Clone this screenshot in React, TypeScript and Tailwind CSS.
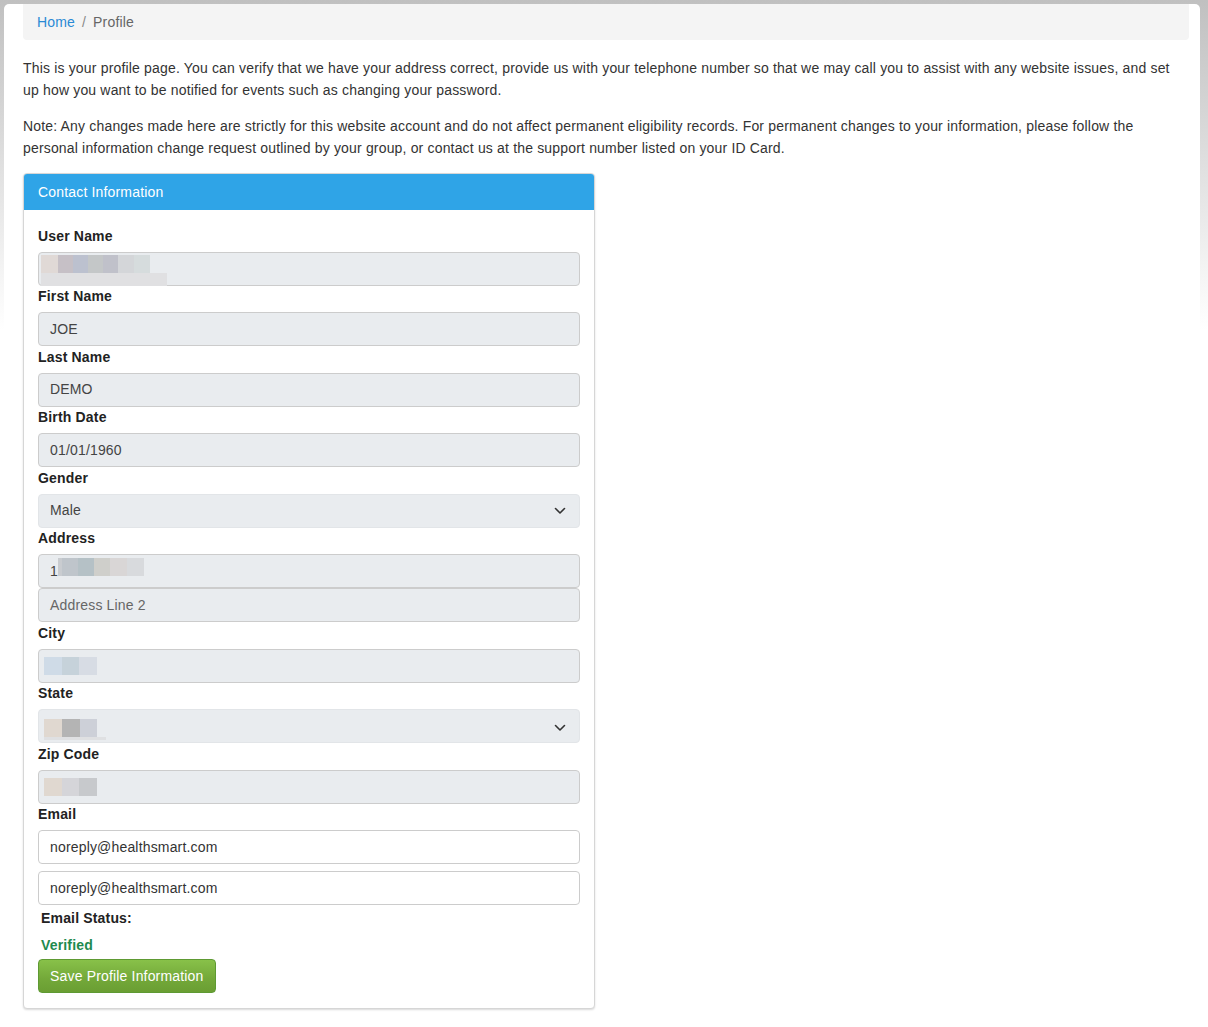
import React from 'react';

const font = { fontFamily: '"Liberation Sans", Arial, sans-serif' };

type Block = { w: number; c: string };

const Blur: React.FC<{ blocks: Block[]; under?: number; underColor?: string }> = ({ blocks, under, underColor = '#e0e0e2' }) => (
  <div className="flex flex-col">
    <div className="flex h-[18px]">
      {blocks.map((b, i) => (
        <div key={i} className="h-full" style={{ width: b.w, background: b.c }} />
      ))}
    </div>
    {under ? <div className="h-[13px]" style={{ width: under, background: underColor }} /> : null}
  </div>
);

const Label: React.FC<{ children: React.ReactNode }> = ({ children }) => (
  <div className="font-bold text-[14px] leading-[20px] text-[#222] mt-[0.5px] mb-[6px]">{children}</div>
);

const DisabledInput: React.FC<{ children?: React.ReactNode; className?: string }> = ({ children, className = '' }) => (
  <div className={`h-[34px] bg-[#e9ecef] border border-[#ccc] rounded-[4px] flex items-center px-[11px] text-[14px] text-[#444] ${className}`}>
    {children}
  </div>
);

const Chevron = () => (
  <svg width="12" height="8" viewBox="0 0 12 8" className="ml-auto">
    <path d="M1.5 1.5 L6 6 L10.5 1.5" fill="none" stroke="#333" strokeWidth="1.6" strokeLinecap="round" strokeLinejoin="round" />
  </svg>
);

const SelectBox: React.FC<{ children?: React.ReactNode }> = ({ children }) => (
  <div className="h-[34px] bg-[#e9ecef] border border-[#e2e5e8] rounded-[4px] flex items-center pl-[11px] pr-[13px] text-[14px] text-[#444]">
    {children}
    <Chevron />
  </div>
);

export default function App() {
  return (
    <div className="min-h-[1027px] bg-[linear-gradient(to_bottom,#c0c0c0_0px,#ffffff_330px,#ffffff_100%)] pt-[4px] pl-[4px] pr-[8px] tracking-[0.17px]" style={font}>
      <div className="bg-white rounded-t-[5px] min-h-[1023px] pl-[19px] pr-[11px] pb-[16px] text-[#333]">
        <div className="bg-[#f4f4f4] rounded-b-[4px] h-[36px] flex items-center px-[14px] text-[14px]">
          <span className="text-[#2a8ad4]">Home</span>
          <span className="text-[#888] px-[7px]">/</span>
          <span className="text-[#666]">Profile</span>
        </div>

        <p className="mt-[17px] pr-[8px] text-[14px] leading-[22px] text-[#333] mb-[14px]">
          This is your profile page. You can verify that we have your address correct, provide us with your telephone number so that we may call you to assist with any website issues, and set up how you want to be notified for events such as changing your password.
        </p>
        <p className="pr-[8px] text-[14px] leading-[22px] text-[#333] mb-[14px]">
          Note: Any changes made here are strictly for this website account and do not affect permanent eligibility records. For permanent changes to your information, please follow the personal information change request outlined by your group, or contact us at the support number listed on your ID Card.
        </p>

        <div className="w-[572px] border border-[#d6d6d6] rounded-[4px] shadow-[0_1px_2px_rgba(0,0,0,0.15)] bg-white overflow-hidden">
          <div className="bg-[#2fa4e7] h-[36px] flex items-center px-[14px] text-white text-[14px]">
            Contact Information
          </div>
          <div className="px-[14px] pt-[15px] pb-[15px]">
            <Label>User Name</Label>
            <DisabledInput className="!px-[2px] !items-start pt-[2px]">
              <Blur
                blocks={[
                  { w: 17, c: '#e0d9d6' },
                  { w: 15, c: '#c6c0c6' },
                  { w: 15, c: '#bcc1cf' },
                  { w: 15, c: '#c4c7c8' },
                  { w: 15, c: '#c0c1ca' },
                  { w: 16, c: '#d4d6d9' },
                  { w: 16, c: '#d6dcdd' },
                ]}
                under={126}
              />
            </DisabledInput>

            <Label>First Name</Label>
            <DisabledInput>JOE</DisabledInput>

            <Label>Last Name</Label>
            <DisabledInput>DEMO</DisabledInput>

            <Label>Birth Date</Label>
            <DisabledInput>01/01/1960</DisabledInput>

            <Label>Gender</Label>
            <SelectBox>Male</SelectBox>

            <Label>Address</Label>
            <DisabledInput className="!items-start pt-[2px]">
              <span className="mt-[4px]">1</span>
              <div className="flex h-[18px] mt-[1px]">
                <div className="w-[4px] h-full bg-[#c9ccd0]" />
                <div className="w-[16px] h-full bg-[#bfc5cb]" />
                <div className="w-[16px] h-full bg-[#b5c1c6]" />
                <div className="w-[16px] h-full bg-[#cfcfcb]" />
                <div className="w-[17px] h-full bg-[#d9d6d6]" />
                <div className="w-[17px] h-full bg-[#d8dadd]" />
              </div>
            </DisabledInput>
            <DisabledInput className="text-[#666]">Address Line 2</DisabledInput>

            <Label>City</Label>
            <DisabledInput className="!px-[5px]">
              <Blur
                blocks={[
                  { w: 18, c: '#cfdbe7' },
                  { w: 17, c: '#c6d2da' },
                  { w: 18, c: '#d7dce4' },
                ]}
              />
            </DisabledInput>

            <Label>State</Label>
            <div className="h-[34px] bg-[#e9ecef] border border-[#e2e5e8] rounded-[4px] flex items-start pl-[5px] pr-[13px] pt-[9px]">
              <div className="flex flex-col">
                <div className="flex h-[18px]">
                  <div className="w-[18px] h-full bg-[#e0d8d0]" />
                  <div className="w-[18px] h-full bg-[#b4b4b4]" />
                  <div className="w-[17px] h-full bg-[#cdd0d8]" />
                </div>
                <div className="w-[62px] h-[3px] bg-[#dfe0e2]" />
              </div>
              <div className="ml-auto mt-[5px] flex">
                <Chevron />
              </div>
            </div>

            <Label>Zip Code</Label>
            <DisabledInput className="!px-[5px]">
              <Blur
                blocks={[
                  { w: 18, c: '#e0d8d0' },
                  { w: 17, c: '#d5d5d9' },
                  { w: 18, c: '#c7c9cc' },
                ]}
              />
            </DisabledInput>

            <Label>Email</Label>
            <div className="h-[34px] bg-white border border-[#ccc] rounded-[4px] flex items-center px-[11px] text-[14px] text-[#333]">
              noreply@healthsmart.com
            </div>
            <div className="h-[34px] mt-[7px] bg-white border border-[#ccc] rounded-[4px] flex items-center px-[11px] text-[14px] text-[#333]">
              noreply@healthsmart.com
            </div>

            <div className="pl-[3px] mt-[3px] font-bold text-[14px] leading-[20px] text-[#222]">Email Status:</div>
            <div className="pl-[3px] mt-[7px] font-bold text-[14px] leading-[20px] text-[#1e8a4f]">Verified</div>
            <div className="mt-[4px] inline-flex items-center h-[34px] px-[11px] rounded-[4px] border border-[#5e9a33] text-white text-[14px] bg-[linear-gradient(to_bottom,#88c149,#73a839_60%,#6a9e33)]">
              Save Profile Information
            </div>
          </div>
        </div>
      </div>
    </div>
  );
}
